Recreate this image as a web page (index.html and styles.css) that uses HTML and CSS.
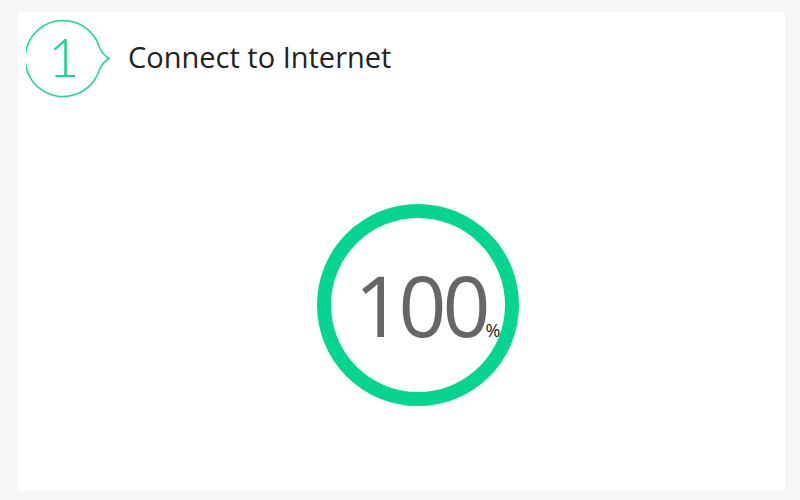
FILE: index.html
```html
<!DOCTYPE html>
<html lang="en">
<head>
    <meta charset="UTF-8">
    <meta name="viewport" content="width=device-width, initial-scale=1.0">
    <title>Connect to Internet</title>
    <link rel="stylesheet" href="styles.css">
</head>
<body>
    <div class="panel">
        <div class="step-header">
            <div class="step-badge">
                <svg class="step-bubble" width="86" height="82" viewBox="0 0 86 82">
                    <path d="M73.5 28.5 A38 38 0 1 0 73.5 50.5 Q76 44 83 39.5 Q76 35 73.5 28.5 Z" fill="none" stroke="#1dd69b" stroke-width="1.5"/>
                </svg>
                <span class="step-num">1</span>
            </div>
            <h1 class="step-title">Connect to Internet</h1>
        </div>

        <div class="progress-area">
            <div class="ring">
                <span class="ring-value">100</span><span class="ring-unit">%</span>
            </div>
        </div>
    </div>
</body>
</html>
```

FILE: styles.css
```css
html, body {
    margin: 0;
    height: 100%;
}

body {
    background-color: #f6f6f6;
    font-family: "Open Sans", "Noto Sans", sans-serif;
}

.panel {
    box-sizing: border-box;
    margin: 12px 15px 0 18px;
    height: 479px;
    background-color: #ffffff;
    display: flex;
    flex-direction: column;
}

.step-header {
    display: flex;
    align-items: center;
    padding: 7px 0 0 8px;
}

.step-badge {
    position: relative;
    width: 86px;
    height: 82px;
}

.step-bubble {
    display: block;
}

.step-num {
    position: absolute;
    left: 0;
    top: -1px;
    width: 76px;
    line-height: 78px;
    text-align: center;
    font-family: "Lato", sans-serif;
    font-weight: 300;
    font-size: 54px;
    color: #1dd69b;
}

.step-title {
    margin: 0 0 8px 16px;
    font-weight: 400;
    font-size: 29px;
    color: #222222;
}

.progress-area {
    flex: 1;
    display: flex;
    justify-content: center;
    padding: 103px 0 0 32px;
}

.ring {
    box-sizing: border-box;
    width: 202px;
    height: 202px;
    border: 14px solid #06d592;
    border-radius: 50%;
    display: flex;
    align-items: baseline;
    justify-content: center;
    padding: 45px 0 0 20px;
}

.ring-value {
    font-size: 84px;
    line-height: 1;
    color: #666666;
    letter-spacing: -4px;
}

.ring-unit {
    font-size: 18px;
    color: #222222;
    margin-left: -1px;
}
```
